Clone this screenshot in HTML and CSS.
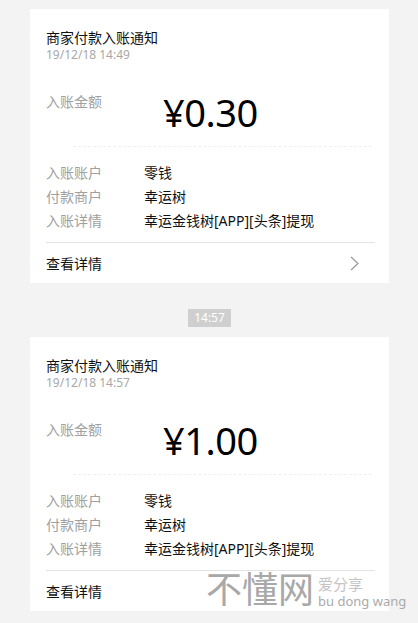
FILE: index.html
```html
<!DOCTYPE html>
<html lang="zh-CN">
<head>
    <meta charset="UTF-8">
    <meta name="viewport" content="width=device-width, initial-scale=1.0">
    <title>商家付款入账通知</title>
    <link rel="stylesheet" href="styles.css">
</head>
<body>
    <div class="chat">
        <div class="card">
            <div class="card-title">商家付款入账通知</div>
            <div class="card-date">19/12/18 14:49</div>
            <div class="amount-row">
                <span class="label">入账金额</span>
                <span class="amount">¥0.30</span>
            </div>
            <div class="dots"></div>
            <div class="info-row"><span class="label">入账账户</span><span class="value">零钱</span></div>
            <div class="info-row"><span class="label">付款商户</span><span class="value">幸运树</span></div>
            <div class="info-row"><span class="label">入账详情</span><span class="value">幸运金钱树[APP][头条]提现</span></div>
            <div class="card-footer">
                <span>查看详情</span>
                <svg class="chevron" width="9" height="15" viewBox="0 0 9 15">
                    <polyline points="1,1 8,7.5 1,14" fill="none" stroke="#999" stroke-width="1.2"/>
                </svg>
            </div>
        </div>

        <div class="time-wrap"><span class="time">14:57</span></div>

        <div class="card">
            <div class="card-title">商家付款入账通知</div>
            <div class="card-date">19/12/18 14:57</div>
            <div class="amount-row">
                <span class="label">入账金额</span>
                <span class="amount">¥1.00</span>
            </div>
            <div class="dots"></div>
            <div class="info-row"><span class="label">入账账户</span><span class="value">零钱</span></div>
            <div class="info-row"><span class="label">付款商户</span><span class="value">幸运树</span></div>
            <div class="info-row"><span class="label">入账详情</span><span class="value">幸运金钱树[APP][头条]提现</span></div>
            <div class="card-footer card-footer-covered">
                <span>查看详情</span>
                <svg class="chevron" width="9" height="15" viewBox="0 0 9 15">
                    <polyline points="1,1 8,7.5 1,14" fill="none" stroke="#999" stroke-width="1.2"/>
                </svg>
            </div>
        </div>
    </div>

    <!-- watermark from the original screenshot -->
    <div class="watermark">
        <span class="wm-big">不懂网</span>
        <span class="wm-side">
            <span class="wm-small">爱分享</span>
            <span class="wm-pinyin">bu dong wang</span>
        </span>
    </div>
</body>
</html>
```

FILE: styles.css
```css
html, body {
    height: 100%;
}

body {
    margin: 0;
    background-color: #f3f3f3;
    font-family: "Noto Sans", "Noto Sans CJK SC", sans-serif;
    color: #111;
    position: relative;
    overflow: hidden;
}

.chat {
    padding: 9px 29px 0 30px;
}

.card {
    background-color: #fff;
    padding: 20px 14px 0 16px;
}

.card-title {
    font-size: 14px;
    line-height: 17px;
    color: #111;
}

.card-date {
    font-size: 12px;
    line-height: 17px;
    color: #a8a8a8;
}

.label {
    width: 98px;
    flex-shrink: 0;
    font-size: 14px;
    color: #a0a0a0;
}

.amount-row {
    display: flex;
    align-items: flex-start;
    margin-top: 30px;
    line-height: 17px;
}

.amount {
    margin-left: 19px;
    font-size: 38px;
    line-height: 38px;
    color: #000;
    letter-spacing: -0.5px;
}

.dots {
    margin: 15px 3px 14px 27px;
    border-top: 1px dashed #f0f0f0;
}

.info-row {
    display: flex;
    line-height: 24px;
    font-size: 14px;
}

.value {
    color: #111;
}

.card-footer {
    margin-top: 9px;
    border-top: 1px solid #e3e3e3;
    height: 40px;
    display: flex;
    align-items: center;
    justify-content: space-between;
    padding-right: 16px;
    font-size: 14px;
}

.card-footer-covered .chevron {
    visibility: hidden;
}

.chevron {
    display: block;
}

.time-wrap {
    display: flex;
    justify-content: center;
    margin: 26px 0 10px;
}

.time {
    background-color: #cfcfcf;
    color: #fff;
    font-size: 12px;
    line-height: 18px;
    padding: 0 6px;
}

.watermark {
    position: absolute;
    left: 206px;
    top: 568px;
    display: flex;
    align-items: flex-start;
    white-space: nowrap;
}

.wm-big {
    font-size: 36px;
    line-height: 44px;
    color: #a8a8a8;
}

.wm-side {
    display: flex;
    flex-direction: column;
    margin-left: 4px;
    padding-top: 7px;
}

.wm-small {
    font-size: 15px;
    line-height: 18px;
    color: #c4c4c4;
}

.wm-pinyin {
    font-size: 13px;
    line-height: 16px;
    color: #aaa;
}
```
